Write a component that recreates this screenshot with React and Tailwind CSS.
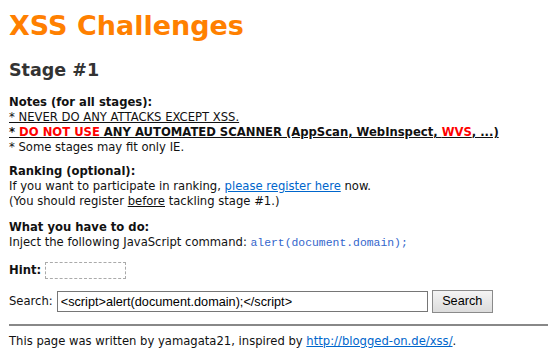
export default function App() {
  const body = { fontFamily: '"DejaVu Sans", Verdana, sans-serif' };
  const arial = { fontFamily: '"Liberation Sans", Arial, sans-serif' };
  return (
    <div className="min-h-[361px] w-[548px] bg-white pl-[9px] pt-[11px] text-[11.6px] leading-[15px] text-[#111]" style={body}>
      <h1 className="text-[27px] font-bold leading-[30px] text-[#ff8000]">XSS Challenges</h1>
      <h2 className="mt-[18px] text-[17.5px] font-bold leading-[22px] text-[#333]">Stage #1</h2>
      <div className="mt-[14px]">
        <div className="font-bold">Notes (for all stages):</div>
        <div><span className="underline">* NEVER DO ANY ATTACKS EXCEPT XSS.</span></div>
        <div className="font-bold underline">
          * <span className="text-[#ff0000]">DO NOT USE</span> ANY AUTOMATED SCANNER (AppScan, WebInspect, <span className="text-[#ff0000]">WVS</span>, ...)
        </div>
        <div>* Some stages may fit only IE.</div>
      </div>
      <div className="mt-[9px]">
        <div className="font-bold">Ranking (optional):</div>
        <div>If you want to participate in ranking, <a className="text-[#0066cc] underline">please register here</a> now.</div>
        <div>(You should register <span className="underline">before</span> tackling stage #1.)</div>
      </div>
      <div className="mt-[11px]">
        <div className="font-bold">What you have to do:</div>
        <div>
          Inject the following JavaScript command:{" "}
          <code className="text-[11.4px] text-[#3366cc]" style={{ fontFamily: '"Liberation Mono", monospace' }}>alert(document.domain);</code>
        </div>
      </div>
      <div className="mt-[11px] flex items-center gap-[4px]">
        <span className="font-bold">Hint:</span>
        <span className="h-[17px] w-[81px] border border-dashed border-[#aaa]"></span>
      </div>
      <div className="mt-[11px] flex items-center">
        <span className="mr-[4px]">Search:</span>
        <input
          className="h-[21px] w-[371px] border border-[#767676] px-[3px] text-[12.7px] text-black outline-none"
          style={arial}
          defaultValue="<script>alert(document.domain);</script>"
        />
        <button
          className="ml-[4px] h-[23px] w-[61px] border border-[#8a8a8a] bg-gradient-to-b from-[#f4f4f4] to-[#dcdcdc] text-[12.7px] text-black"
          style={arial}
        >
          Search
        </button>
      </div>
      <hr className="mt-[11px] border-t-2 border-[#888]" />
      <div className="mt-[8px]">
        This page was written by yamagata21, inspired by{" "}
        <a className="text-[#0066cc] underline">http://blogged-on.de/xss/</a>.
      </div>
    </div>
  );
}
